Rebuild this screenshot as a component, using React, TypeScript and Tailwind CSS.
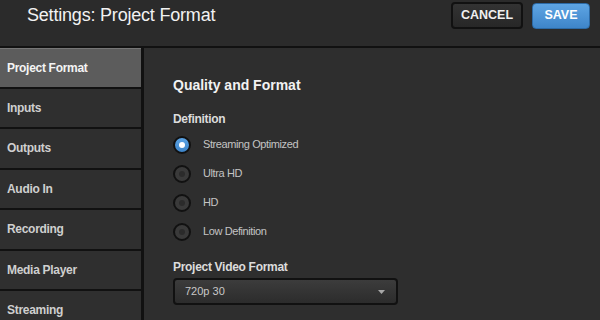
import { useState } from 'react';

const navItems = ['Project Format', 'Inputs', 'Outputs', 'Audio In', 'Recording', 'Media Player', 'Streaming'];

const definitions = ['Streaming Optimized', 'Ultra HD', 'HD', 'Low Definition'];

function Radio({ checked }: { checked: boolean }) {
  return (
    <span
      className={`w-[18px] h-[18px] rounded-full border-2 border-[#111] flex items-center justify-center ${
        checked ? 'bg-gradient-to-b from-[#5ba3e4] to-[#3d84c8]' : 'bg-[#3a3a3a]'
      }`}
    >
      <span className={`w-[6px] h-[6px] rounded-full ${checked ? 'bg-white' : 'bg-[#2b2b2b]'}`} />
    </span>
  );
}

export default function App() {
  const [active, setActive] = useState('Project Format');
  const [definition, setDefinition] = useState('Streaming Optimized');

  return (
    <div className="w-[600px] h-[320px] overflow-hidden flex flex-col bg-[#2e2e2e] font-['Liberation_Sans',Arial,sans-serif]">
      {/* Header */}
      <header className="h-[48px] shrink-0 bg-[#2b2b2b] border-b-2 border-[#111] flex items-start justify-between pl-[27px] pr-[10px] pt-[2px]">
        <h1 className="text-[18px] leading-[27px] text-[#f2f2f2] tracking-[-0.2px]">Settings: Project Format</h1>
        <div className="flex items-center gap-[9px]">
          <button className="w-[72px] h-[27px] rounded-[4px] border-2 border-[#111] bg-gradient-to-b from-[#333] to-[#272727] text-[12.5px] font-bold text-[#f0f0f0]">
            CANCEL
          </button>
          <button className="w-[58px] h-[26px] rounded-[4px] border border-[#2c6aa6] bg-gradient-to-b from-[#5ea5e4] to-[#3e85c9] text-[12.5px] font-bold text-white">
            SAVE
          </button>
        </div>
      </header>

      <div className="flex flex-1 min-h-0">
        {/* Sidebar */}
        <nav className="w-[144px] shrink-0 border-r-[3px] border-[#111] bg-[#111] flex flex-col">
          {navItems.map((item) => (
            <button
              key={item}
              onClick={() => setActive(item)}
              className={`h-[38.5px] shrink-0 mb-[2px] flex items-center pl-[7px] text-left text-[12px] font-bold tracking-[-0.3px] ${
                active === item
                  ? 'bg-[#5c5c5c] border-t border-[#767676] text-[#f4f4f4]'
                  : 'bg-[#2f2f2f] text-[#cfcfcf]'
              }`}
            >
              {item}
            </button>
          ))}
        </nav>

        {/* Content */}
        <main className="flex-1 pl-[29px] pt-[29px]">
          <h2 className="text-[14px] leading-[16px] font-bold text-[#f2f2f2]">Quality and Format</h2>

          <h3 className="mt-[19px] text-[12px] leading-[14px] font-bold tracking-[-0.3px] text-[#dcdcdc]">Definition</h3>
          <div className="mt-[4px] flex flex-col">
            {definitions.map((d) => (
              <label
                key={d}
                onClick={() => setDefinition(d)}
                className="h-[29px] flex items-center gap-[12px] cursor-pointer"
              >
                <Radio checked={definition === d} />
                <span className="text-[11px] tracking-[-0.4px] text-[#c4c4c4]">{d}</span>
              </label>
            ))}
          </div>

          <h3 className="mt-[14px] text-[12px] leading-[14px] font-bold tracking-[-0.3px] text-[#dcdcdc]">
            Project Video Format
          </h3>
          <div className="mt-[4px] w-[225px] h-[27px] rounded-[4px] border-2 border-[#111] bg-gradient-to-b from-[#3c3c3c] to-[#2c2c2c] flex items-center justify-between pl-[10px] pr-[11px]">
            <span className="text-[11px] text-[#c8c8c8]">720p 30</span>
            <svg width="7" height="4" viewBox="0 0 7 4">
              <path d="M0 0h7L3.5 4z" fill="#a8a8a8" />
            </svg>
          </div>
        </main>
      </div>
    </div>
  );
}
